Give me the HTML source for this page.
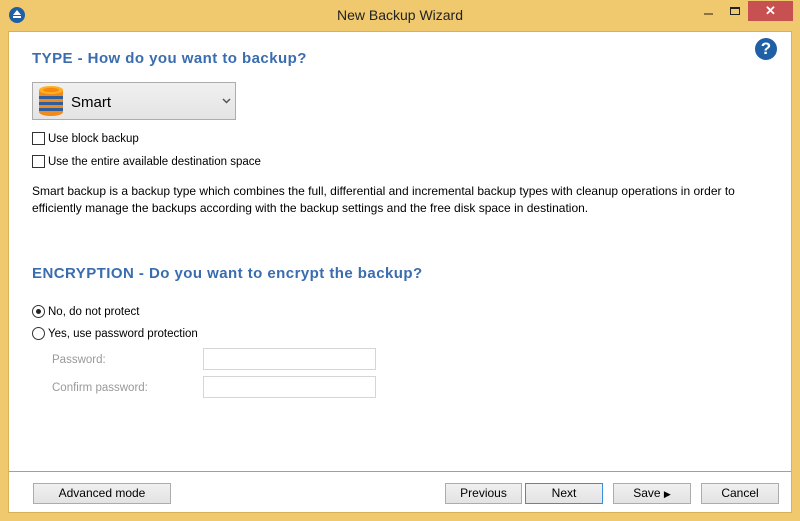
<!DOCTYPE html>
<html><head><style>
*{margin:0;padding:0;box-sizing:border-box}
body{width:800px;height:521px;background:#F0C86E;position:relative;overflow:hidden;font-family:"Liberation Sans",sans-serif;font-size:12px;color:#000}
.abs{position:absolute}
.client{left:8px;top:31px;width:784px;height:482px;background:#fff;border:1px solid #D9B255}
.title{left:0;top:7px;width:800px;text-align:center;font-size:14px;color:#222}
h2{position:absolute;color:#3A6CB0;font-size:15px;font-weight:bold;letter-spacing:0.45px}
.btn{position:absolute;height:21px;background:linear-gradient(#F0F0F0,#E3E3E3);border:1px solid #ACACAC;text-align:center;line-height:19px;font-size:12px}
.cb{position:absolute;width:13px;height:13px;border:1px solid #333;background:#fff}
.rb{position:absolute;width:13px;height:13px;border:1px solid #333;border-radius:50%;background:#fff}
.lbl{position:absolute;font-size:11.5px}
.gray{color:#999}
.inp{position:absolute;width:173px;height:22px;border:1px solid #D5D5D5;background:#fff}
</style></head><body>
<div class="abs" style="left:9px;top:7px;width:16px;height:16px;border-radius:50%;background:#1F5FA5"></div>
<div class="abs" style="left:13px;top:10px;width:0;height:0;border-left:4px solid transparent;border-right:4px solid transparent;border-bottom:5px solid #fff"></div>
<div class="abs" style="left:13px;top:16px;width:8px;height:2px;background:#fff"></div>
<div class="abs title">New Backup Wizard</div>
<div class="abs" style="left:704px;top:13px;width:9px;height:2px;background:#8a7440"></div>
<div class="abs" style="left:730px;top:7px;width:10px;height:8px;border:1px solid #222;border-top-width:2px"></div>
<div class="abs" style="left:748px;top:1px;width:45px;height:20px;background:#C75050;color:#fff;text-align:center;font-size:13px;line-height:20px;font-weight:bold">✕</div>
<div class="abs client"></div>
<div class="abs" style="left:755px;top:38px;width:22px;height:22px;border-radius:50%;background:#1F5FA5;color:#fff;text-align:center;font-weight:bold;font-size:17px;line-height:22px">?</div>
<h2 style="left:32px;top:50px">TYPE - How do you want to backup?</h2>
<div class="abs" style="left:32px;top:82px;width:204px;height:38px;background:linear-gradient(#F0F0F0,#E4E4E4);border:1px solid #ACACAC"></div>
<svg class="abs" style="left:38px;top:85px" width="26" height="32" viewBox="0 0 26 32">
<ellipse cx="13" cy="27" rx="12" ry="4" fill="#F08A1C"/>
<rect x="1" y="5" width="24" height="22" fill="#F08A1C"/>
<rect x="1" y="11" width="24" height="3" fill="#2F5E9E"/>
<rect x="1" y="17" width="24" height="3" fill="#2F5E9E"/>
<rect x="1" y="23" width="24" height="3" fill="#2F5E9E"/>
<ellipse cx="13" cy="5" rx="12" ry="4" fill="#FFB020"/>
<ellipse cx="13" cy="5" rx="8" ry="2.2" fill="#F58A10"/>
</svg>
<div class="lbl" style="left:71px;top:94px;font-size:15px">Smart</div>
<svg class="abs" style="left:222px;top:98px" width="9" height="6"><path d="M1 1L4.5 4.5L8 1" stroke="#555" stroke-width="1.5" fill="none"/></svg>
<div class="cb" style="left:32px;top:132px"></div><div class="lbl" style="left:48px;top:133px">Use block backup</div>
<div class="cb" style="left:32px;top:155px"></div><div class="lbl" style="left:48px;top:156px">Use the entire available destination space</div>
<div class="lbl" style="left:32px;top:183px;width:760px;line-height:17px;font-size:12px;white-space:nowrap">Smart backup is a backup type which combines the full, differential and incremental backup types with cleanup operations in order to<br>efficiently manage the backups according with the backup settings and the free disk space in destination.</div>
<h2 style="left:32px;top:265px">ENCRYPTION - Do you want to encrypt the backup?</h2>
<div class="rb" style="left:32px;top:305px"><div style="position:absolute;left:3px;top:3px;width:5px;height:5px;border-radius:50%;background:#222"></div></div>
<div class="lbl" style="left:48px;top:306px">No, do not protect</div>
<div class="rb" style="left:32px;top:327px"></div><div class="lbl" style="left:48px;top:328px">Yes, use password protection</div>
<div class="lbl gray" style="left:52px;top:354px">Password:</div>
<div class="inp" style="left:203px;top:348px"></div>
<div class="lbl gray" style="left:52px;top:382px">Confirm password:</div>
<div class="inp" style="left:203px;top:376px"></div>
<div class="abs" style="left:9px;top:471px;width:782px;height:1px;background:#A0A0A0"></div>
<div class="btn" style="left:33px;top:483px;width:138px">Advanced mode</div>
<div class="btn" style="left:445px;top:483px;width:77px">Previous</div>
<div class="btn" style="left:525px;top:483px;width:78px;border-color:#3C8CE0">Next</div>
<div class="btn" style="left:613px;top:483px;width:78px">Save <span style="font-size:9px">▶</span></div>
<div class="btn" style="left:701px;top:483px;width:78px">Cancel</div>
</body></html>
